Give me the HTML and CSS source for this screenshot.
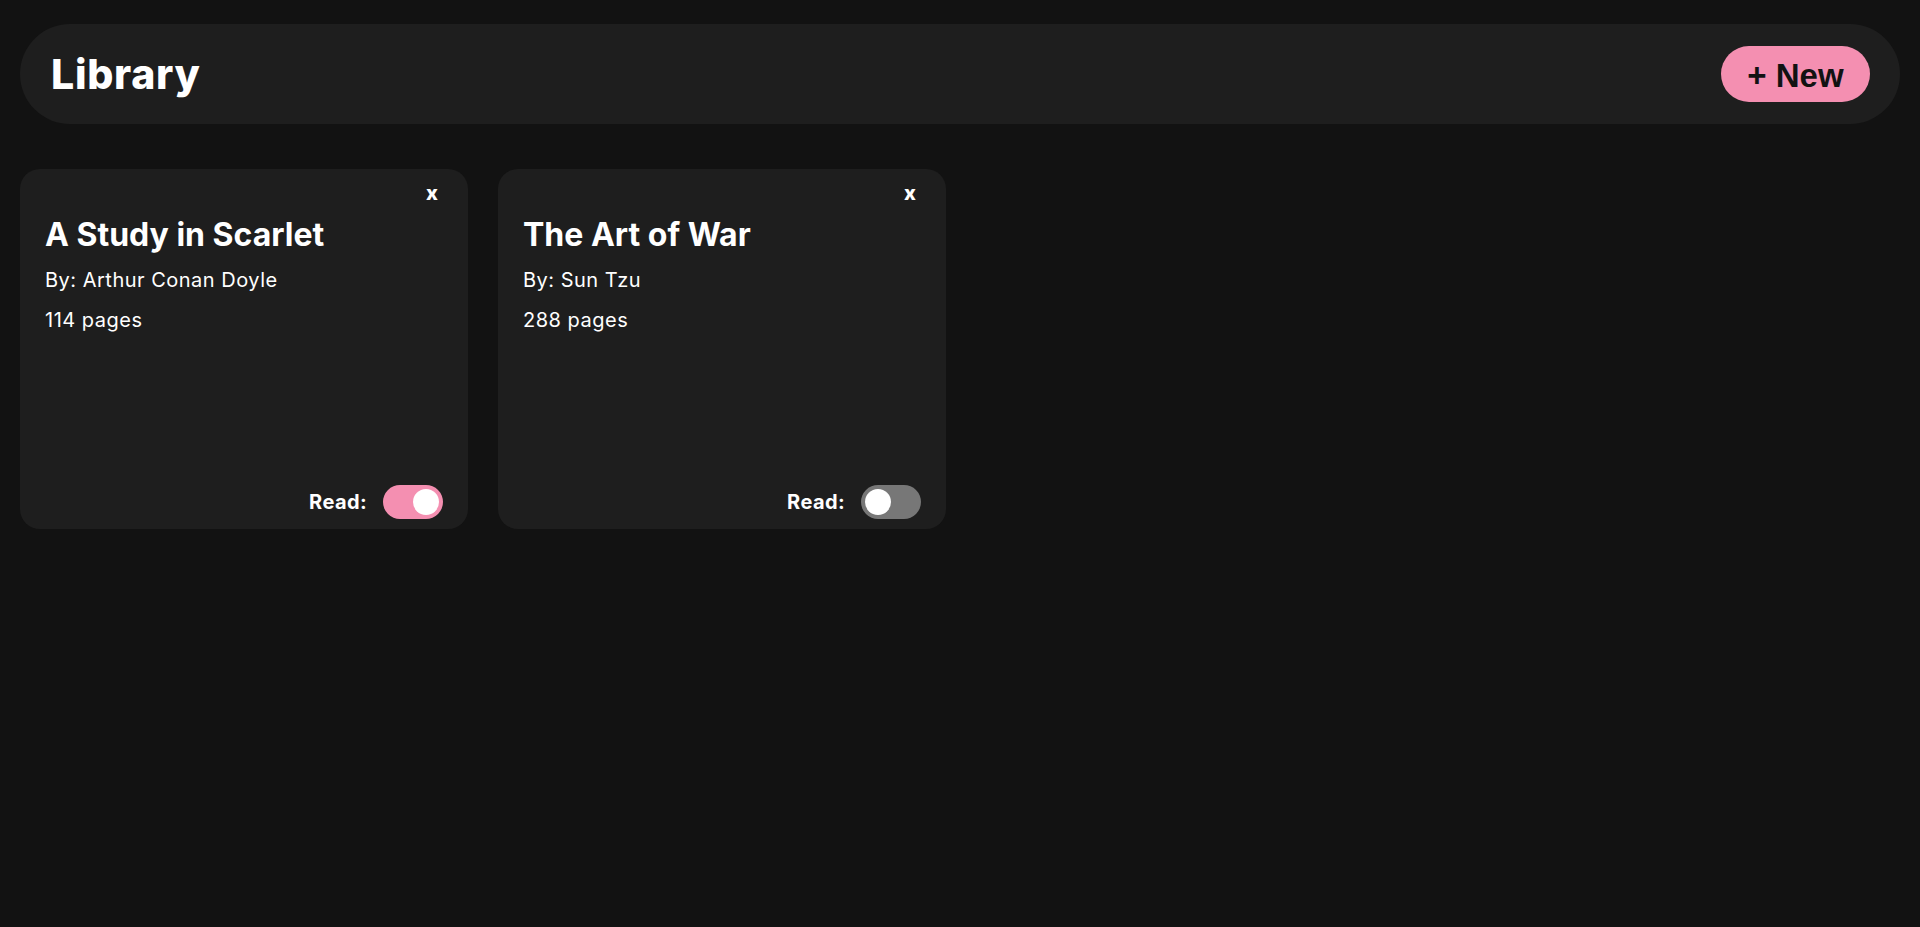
FILE: index.html
```html
<!DOCTYPE html>
<html lang="en">
<head>
<meta charset="utf-8">
<title>Library</title>
<link rel="stylesheet" href="styles.css">
</head>
<body>
<header class="topbar">
  <h1 class="brand">Library</h1>
  <button class="new-btn">+ New</button>
</header>
<main class="grid">
  <article class="card">
    <div class="card-top"><button class="close">x</button></div>
    <h2 class="title">A Study in Scarlet</h2>
    <p class="meta">By: Arthur Conan Doyle</p>
    <p class="meta">114 pages</p>
    <div class="card-foot">
      <span class="read-label">Read:</span>
      <span class="toggle on"><span class="knob"></span></span>
    </div>
  </article>
  <article class="card">
    <div class="card-top"><button class="close">x</button></div>
    <h2 class="title">The Art of War</h2>
    <p class="meta">By: Sun Tzu</p>
    <p class="meta">288 pages</p>
    <div class="card-foot">
      <span class="read-label">Read:</span>
      <span class="toggle"><span class="knob"></span></span>
    </div>
  </article>
</main>
</body>
</html>
```
FILE: styles.css
```css
* { box-sizing: border-box; }
html, body { margin: 0; }
body {
  background: #121212;
  color: #ffffff;
  font-family: "Inter", "DejaVu Sans", sans-serif;
  padding: 24px 20px;
  min-height: 927px;
}
.topbar {
  height: 100px;
  background: #1e1e1e;
  border-radius: 50px;
  display: flex;
  align-items: center;
  justify-content: space-between;
  padding: 0 30px 0 31px;
}
.brand {
  margin: 0;
  font-size: 41px;
  font-weight: 800;
  letter-spacing: 0.7px;
}
.new-btn {
  height: 56px;
  width: 149px;
  border: none;
  border-radius: 28px;
  background: #f48fb1;
  color: #121212;
  font-family: "Liberation Sans", Arial, sans-serif;
  font-weight: 700;
  font-size: 33px;
  padding: 3px 0 0;
}
.grid {
  margin-top: 45px;
  display: grid;
  grid-template-columns: repeat(auto-fill, 448px);
  gap: 30px;
}
.card {
  height: 360px;
  background: #1e1e1e;
  border-radius: 20px;
  padding: 14px 25px 10px;
  display: flex;
  flex-direction: column;
}
.card-top {
  display: flex;
  justify-content: flex-end;
  padding-right: 5px;
}
.close {
  background: none;
  border: none;
  color: #fff;
  font-family: "Inter", "DejaVu Sans", sans-serif;
  font-weight: 800;
  font-size: 20px;
  padding: 0;
  line-height: 20px;
}
.title {
  margin: 12px 0 5px;
  font-size: 32px;
  font-weight: 700;
  line-height: 40px;
}
.meta {
  margin: 0;
  font-size: 20px;
  line-height: 40px;
  letter-spacing: 0.5px;
}
.card-foot {
  margin-top: auto;
  display: flex;
  justify-content: flex-end;
  align-items: center;
  gap: 16px;
}
.read-label {
  font-size: 20px;
  font-weight: 700;
  letter-spacing: 0.4px;
}
.toggle {
  width: 60px;
  height: 34px;
  border-radius: 17px;
  background: #777777;
  display: flex;
  align-items: center;
  padding: 0 4px;
}
.toggle.on {
  background: #f48fb1;
  justify-content: flex-end;
}
.knob {
  width: 26px;
  height: 26px;
  border-radius: 50%;
  background: #ffffff;
}
```
